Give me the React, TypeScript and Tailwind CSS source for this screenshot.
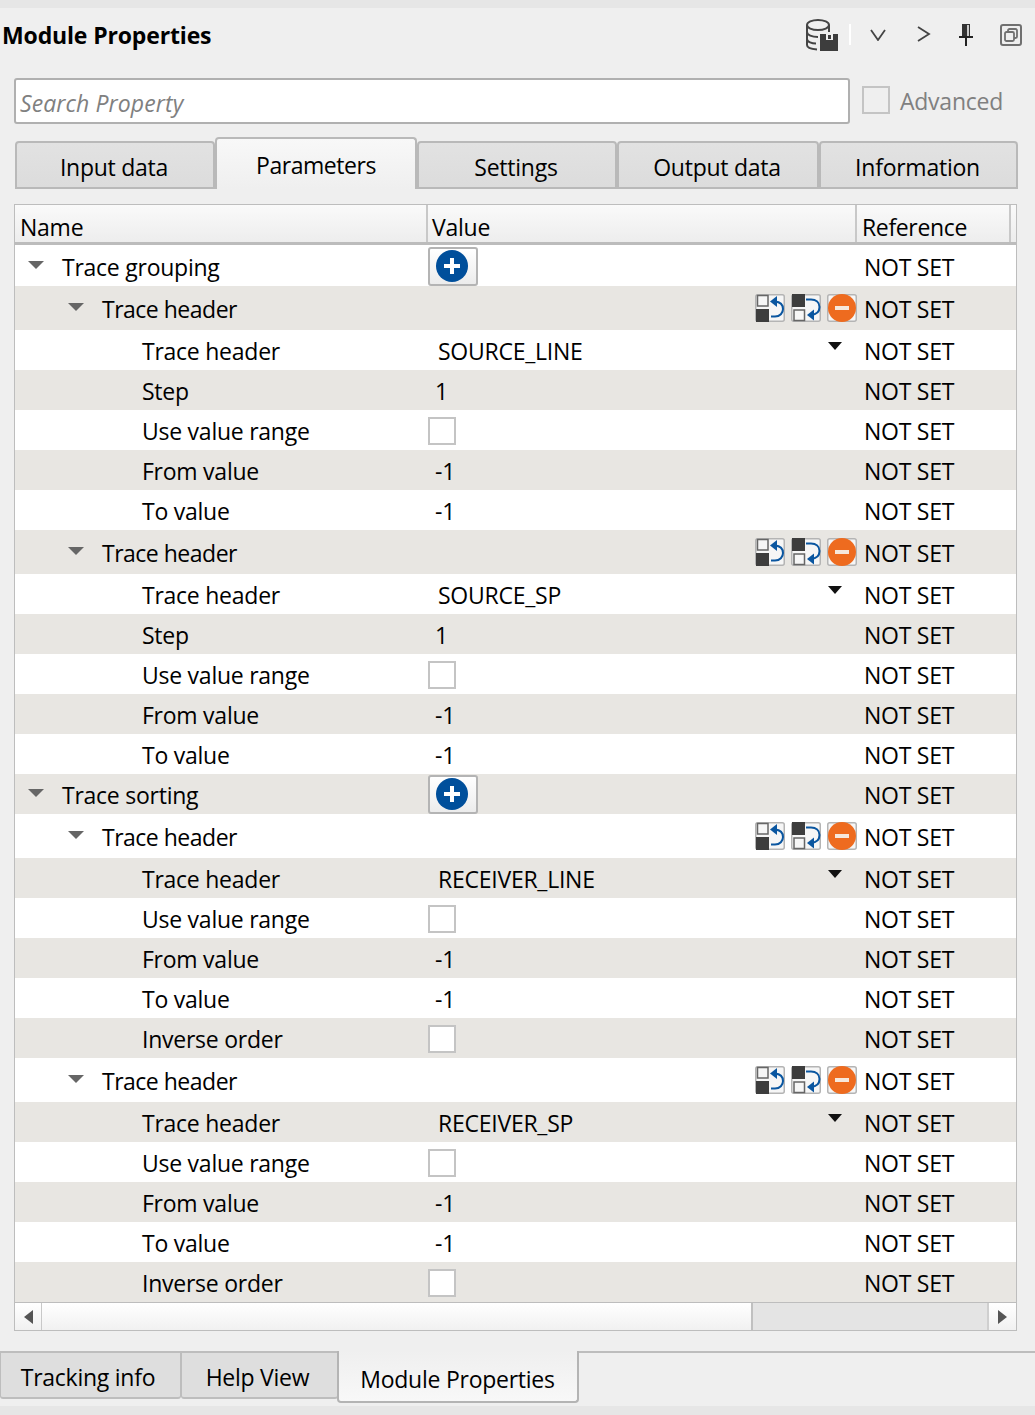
import type { ReactNode } from "react";

type Row = {
  name: string;
  level: 0 | 1 | 2;
  h: number;
  value?: string;
  kind?: "add" | "group" | "combo" | "check" | "text";
};

const source = (header: string): Row[] => [
  { name: "Trace header", level: 1, h: 44, kind: "group" },
  { name: "Trace header", level: 2, h: 40, kind: "combo", value: header },
  { name: "Step", level: 2, h: 40, kind: "text", value: "1" },
  { name: "Use value range", level: 2, h: 40, kind: "check" },
  { name: "From value", level: 2, h: 40, kind: "text", value: "-1" },
  { name: "To value", level: 2, h: 40, kind: "text", value: "-1" },
];

const receiver = (header: string): Row[] => [
  { name: "Trace header", level: 1, h: 44, kind: "group" },
  { name: "Trace header", level: 2, h: 40, kind: "combo", value: header },
  { name: "Use value range", level: 2, h: 40, kind: "check" },
  { name: "From value", level: 2, h: 40, kind: "text", value: "-1" },
  { name: "To value", level: 2, h: 40, kind: "text", value: "-1" },
  { name: "Inverse order", level: 2, h: 40, kind: "check" },
];

const rows: Row[] = [
  { name: "Trace grouping", level: 0, h: 41, kind: "add" },
  ...source("SOURCE_LINE"),
  ...source("SOURCE_SP"),
  { name: "Trace sorting", level: 0, h: 40, kind: "add" },
  ...receiver("RECEIVER_LINE"),
  ...receiver("RECEIVER_SP"),
];

function Caret() {
  return (
    <svg width="16" height="8" viewBox="0 0 16 8" className="shrink-0">
      <path d="M0 0H16L8 8Z" fill="#666666" />
    </svg>
  );
}

function AddButton() {
  return (
    <div className="w-[50px] h-[39px] flex items-start pl-[6px] pt-[1px] rounded-[3px] border-2 border-[#b4b4b4] bg-gradient-to-b from-white to-[#ececec]">
      <svg width="32" height="32" viewBox="0 0 32 32">
        <circle cx="16" cy="16" r="16" fill="#004f9b" />
        <path d="M16 8v16M8 16h16" stroke="#fff" strokeWidth="4" />
      </svg>
    </div>
  );
}

function MoveUp() {
  return (
    <svg width="30" height="28" viewBox="0 0 30 28">
      <rect x="0.75" y="0.75" width="28.5" height="26.5" rx="2" fill="#f6f6f6" stroke="#b4b4b4" strokeWidth="1.5" />
      <rect x="1" y="15" width="13" height="13" fill="#3d3d3d" />
      <rect x="2.5" y="1.5" width="10.5" height="10.5" fill="#f6f6f6" stroke="#666" strokeWidth="1.5" />
      <path d="M20 7.5c5 0.5 8 3.5 8 7.5s-3 7.5-8 7.5h-4" fill="none" stroke="#0a56a0" strokeWidth="2" />
      <path d="M15 7.5l7-5.5v11Z" fill="#0a56a0" />
    </svg>
  );
}

function MoveDown() {
  return (
    <svg width="30" height="28" viewBox="0 0 30 28">
      <rect x="0.75" y="0.75" width="28.5" height="26.5" rx="2" fill="#f6f6f6" stroke="#b4b4b4" strokeWidth="1.5" />
      <rect x="1" y="0" width="13" height="13" fill="#3d3d3d" />
      <rect x="3" y="16" width="10.5" height="10.5" fill="#f6f6f6" stroke="#666" strokeWidth="1.5" />
      <path d="M15 5.5h5c5 0 8.5 3 8.5 7.5s-3 7.5-8.5 8" fill="none" stroke="#0a56a0" strokeWidth="2" />
      <path d="M16 21l7-5.5v11Z" fill="#0a56a0" />
    </svg>
  );
}

function Remove() {
  return (
    <svg width="30" height="28" viewBox="0 0 30 28">
      <rect x="0.75" y="0.75" width="28.5" height="26.5" rx="2" fill="#f6f6f6" stroke="#b4b4b4" strokeWidth="1.5" />
      <circle cx="15" cy="14" r="14" fill="#ee6b1f" />
      <path d="M8 14h14" stroke="#f6e8dc" strokeWidth="4" />
    </svg>
  );
}

function ValueCell({ row }: { row: Row }) {
  if (row.kind === "add") {
    return (
      <div className="self-end">
        <AddButton />
      </div>
    );
  }
  if (row.kind === "group") {
    return (
      <div className="flex justify-end gap-[6px]">
        <MoveUp />
        <MoveDown />
        <Remove />
      </div>
    );
  }
  if (row.kind === "combo") {
    return (
      <div className="flex justify-between pl-[10px] pr-[15px] pt-[2px]">
        <span>{row.value}</span>
        <svg width="14" height="8" viewBox="0 0 14 8" className="mt-[6px]">
          <path d="M0 0H14L7 8Z" fill="#111111" />
        </svg>
      </div>
    );
  }
  if (row.kind === "check") {
    return <div className="mt-[2px] w-[28px] h-[28px] bg-white border-2 border-[#c4c4c4]" />;
  }
  return <div className="pl-[7px] pt-[2px]">{row.value}</div>;
}

function PropertyRow({ row, odd }: { row: Row; odd: boolean }) {
  const indent = row.level === 0 ? "pl-[13px]" : row.level === 1 ? "pl-[53px]" : "pl-[127px]";
  return (
    <div
      className={`grid grid-cols-[413px_429px_1fr] items-center ${odd ? "bg-[#e8e6e2]" : "bg-white"}`}
      style={{ height: row.h }}
    >
      <div className={`flex items-center pt-[2px] ${indent}`}>
        {row.level < 2 && (
          <span className="w-[34px] flex -mt-[4px]">
            <Caret />
          </span>
        )}
        <span className={row.level === 1 ? "tracking-[-0.5px]" : ""}>{row.name}</span>
      </div>
      <ValueCell row={row} />
      <div className="pl-[7px] pt-[2px]">NOT SET</div>
    </div>
  );
}

function HeaderCell({ children, className }: { children: ReactNode; className: string }) {
  return <div className={`flex items-end h-full border-r-2 border-[#c8c8c8] ${className}`}>{children}</div>;
}

function Tab({ label, active, className }: { label: string; active?: boolean; className: string }) {
  return (
    <div
      className={`flex items-center justify-center rounded-t-[4px] border-2 border-[#b9b9b9] ${
        active
          ? "h-[52px] border-b-0 bg-gradient-to-b from-[#f8f8f8] to-[#efefef] pt-[1px] tracking-[-0.45px]"
          : "h-[48px] bg-gradient-to-b from-[#e2e2e2] to-[#dcdcdc] pt-[4px] pr-[2px]"
      } ${className}`}
    >
      {label}
    </div>
  );
}

export default function App() {
  return (
    <div className="w-[1035px] h-[1415px] overflow-hidden flex flex-col bg-[#efefef] text-[23px] leading-[30px] tracking-[-0.25px] text-black font-['Open_Sans','Noto_Sans',sans-serif]">
      <div className="h-[8px] shrink-0 bg-[#e6e6e6]" />

      {/* title bar */}
      <div className="h-[54px] shrink-0 flex items-center pl-[2px] pr-[13px]">
        <h1 className="font-bold text-[23px] -mt-[1px] tracking-[-0.15px]">Module Properties</h1>
        <div className="ml-auto flex items-center">
          <svg width="32" height="32" viewBox="0 0 32 32" className="-mt-[1px]">
            <g fill="none" stroke="#444" strokeWidth="2">
              <ellipse cx="12" cy="6" rx="11" ry="5" />
              <path d="M1 6v20c0 2.500 4 4 10 4.500M1 13c0 3 5 5 11 5M1 20c0 3 5 4.500 9 4.500M23 6v7" />
            </g>
            <path d="M14 15h18v17H14Z" fill="#3d3d3d" />
            <path d="M20 15h7v6h-7Z" fill="#efefef" />
            <path d="M22 16h3v4h-3Z" fill="#3d3d3d" />
          </svg>
          <div className="w-[2px] h-[21px] bg-white ml-[11px] mr-[19px] -mt-[1px]" />
          <svg width="16" height="12" viewBox="0 0 16 12" className="mr-[31px]">
            <path d="M1 1l7 10 7-10" fill="none" stroke="#444" strokeWidth="1.8" />
          </svg>
          <svg width="14" height="16" viewBox="0 0 14 16" className="mr-[27px] -mt-[2px]">
            <path d="M1 1l11 7-11 7" fill="none" stroke="#444" strokeWidth="1.8" />
          </svg>
          <svg width="16" height="24" viewBox="0 0 16 24" className="mr-[26px]">
            <path d="M4 1h8v13H4Z" fill="#333" />
            <path d="M9 2h2v11H9Z" fill="#ccc" />
            <path d="M1 14h14M8 14v9" stroke="#222" strokeWidth="2" />
          </svg>
          <svg width="22" height="22" viewBox="0 0 22 22">
            <rect x="1" y="1" width="20" height="20" rx="2" fill="none" stroke="#707070" strokeWidth="2" />
            <rect x="8" y="5" width="9" height="9" rx="1.500" fill="none" stroke="#707070" strokeWidth="1.800" />
            <rect x="5" y="8" width="9" height="9" rx="1.500" fill="#efefef" stroke="#707070" strokeWidth="1.800" />
          </svg>
        </div>
      </div>

      {/* search */}
      <div className="flex items-center h-[46px] shrink-0 mt-[16px] pl-[14px]">
        <div className="w-[836px] h-[46px] bg-white rounded-[3px] border-2 border-[#b0b0b0] flex items-center pl-[4px] pt-[4px] italic tracking-[0.1px] text-[#808080]">
          Search Property
        </div>
        <div className="ml-[12px] w-[28px] h-[28px] border-2 border-[#c4c4c4] -mt-[2px]" />
        <span className="ml-[10px] text-[#808080] -mt-[1px]">Advanced</span>
      </div>

      {/* tabs */}
      <div className="flex items-end h-[52px] shrink-0 mt-[13px] pl-[15px]">
        <Tab label="Input data" className="w-[200px]" />
        <Tab label="Parameters" active className="w-[202px]" />
        <Tab label="Settings" className="w-[200px]" />
        <Tab label="Output data" className="w-[202px]" />
        <Tab label="Information" className="w-[199px]" />
      </div>

      {/* property table */}
      <div className="mt-[15px] ml-[14px] w-[1003px] h-[1127px] shrink-0 border border-[#bdbdbd] flex flex-col">
        <div className="h-[40px] shrink-0 grid grid-cols-[413px_429px_154px_1fr] bg-gradient-to-b from-[#fafafa] to-[#ededed] border-b-[3px] border-[#bcbcbc]">
          <HeaderCell className="pl-[5px]">Name</HeaderCell>
          <HeaderCell className="pl-[4px]">Value</HeaderCell>
          <HeaderCell className="pl-[5px] tracking-[-0.35px]">Reference</HeaderCell>
          <div />
        </div>
        <div className="flex flex-col">
          {rows.map((row, i) => (
            <PropertyRow key={i} row={row} odd={i % 2 === 1} />
          ))}
        </div>
        <div className="flex-1 flex border-t border-[#bdbdbd] bg-gradient-to-b from-white to-[#f1f1f1]">
          <div className="w-[27px] flex items-center justify-center border-r border-[#c8c8c8]">
            <svg width="9" height="14" viewBox="0 0 9 14">
              <path d="M9 0V14L0 7Z" fill="#555" />
            </svg>
          </div>
          <div className="w-[711px] border-r-2 border-[#c0c0c0]" />
          <div className="flex-1 bg-[#e4e4e4] border-r-2 border-[#cfcfcf]" />
          <div className="w-[27px] flex items-center justify-center">
            <svg width="9" height="14" viewBox="0 0 9 14">
              <path d="M0 0V14L9 7Z" fill="#555" />
            </svg>
          </div>
        </div>
      </div>

      {/* dock tabs */}
      <div className="mt-[20px] flex-1 flex items-start border-t-2 border-[#bdbdbd]">
        <div className="w-[181px] h-[46px] flex items-center justify-center rounded-b-[3px] border-x border-b-2 border-[#bdbdbd] bg-[#dedede] pr-[5px] pt-[3px]">
          Tracking info
        </div>
        <div className="w-[157px] h-[46px] flex items-center justify-center rounded-b-[3px] border-x border-b-2 border-[#bdbdbd] bg-[#dedede] pr-[4px] pt-[3px]">
          Help View
        </div>
        <div className="w-[242px] h-[52px] -ml-[1px] -mt-[2px] flex items-center justify-center rounded-b-[4px] border-x-2 border-b-2 border-[#b4b4b4] bg-gradient-to-b from-[#efefef] to-[#f8f8f8] pt-[5px] pr-[1px]">
          Module Properties
        </div>
      </div>
      <div className="h-[9px] shrink-0 bg-[#e6e6e6]" />
    </div>
  );
}
